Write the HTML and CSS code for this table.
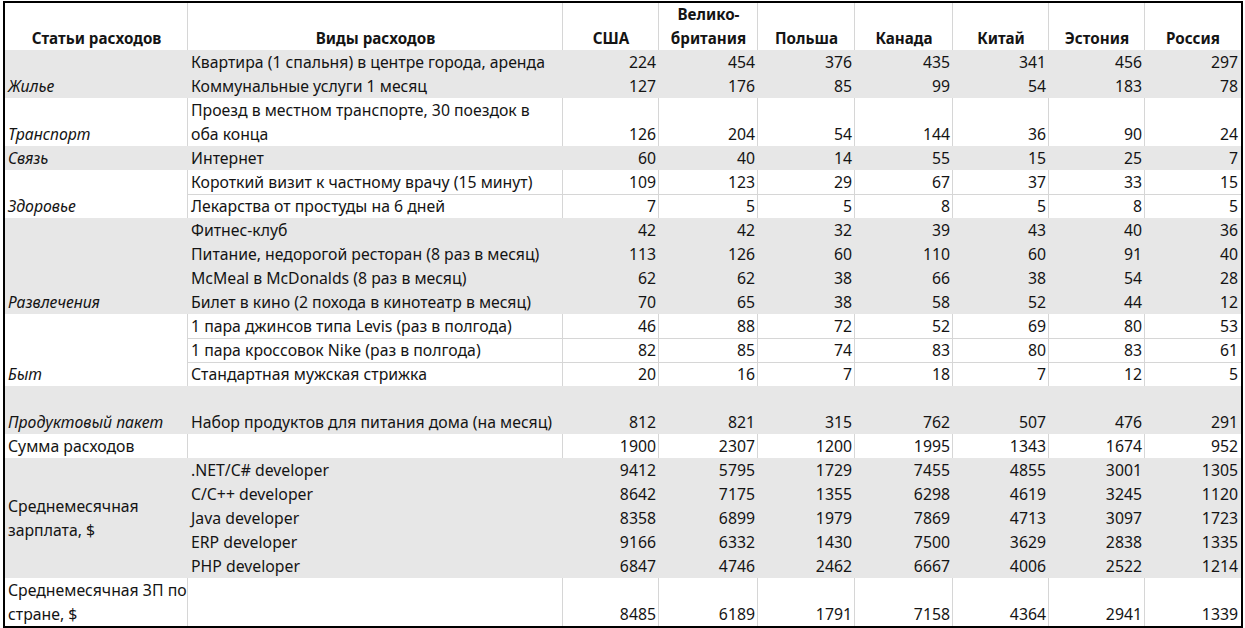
FILE: index.html
```html
<!DOCTYPE html>
<html lang="ru">
<head>
<meta charset="utf-8">
<title>Расходы и зарплаты</title>
<link rel="stylesheet" href="styles.css">
</head>
<body>
<div class="wrap">
<table class="sheet">
  <colgroup>
    <col class="c-cat"><col class="c-kind">
    <col class="c96"><col class="c99"><col class="c97"><col class="c98"><col class="c96"><col class="c96"><col class="c96">
  </colgroup>
  <thead>
    <tr class="w head">
      <th>Статьи расходов</th>
      <th>Виды расходов</th>
      <th>США</th>
      <th>Велико-<br>британия</th>
      <th>Польша</th>
      <th>Канада</th>
      <th>Китай</th>
      <th>Эстония</th>
      <th class="last">Россия</th>
    </tr>
  </thead>
  <tbody>
    <tr class="g">
      <td class="cat it" rowspan="2">Жилье</td>
      <td class="kind">Квартира (1 спальня) в центре города, аренда</td>
      <td class="n">224</td><td class="n">454</td><td class="n">376</td><td class="n">435</td><td class="n">341</td><td class="n">456</td><td class="n last">297</td>
    </tr>
    <tr class="g">
      <td class="kind">Коммунальные услуги 1 месяц</td>
      <td class="n">127</td><td class="n">176</td><td class="n">85</td><td class="n">99</td><td class="n">54</td><td class="n">183</td><td class="n last">78</td>
    </tr>
    <tr class="w">
      <td class="cat it">Транспорт</td>
      <td class="kind">Проезд в местном транспорте, 30 поездок в<br>оба конца</td>
      <td class="n">126</td><td class="n">204</td><td class="n">54</td><td class="n">144</td><td class="n">36</td><td class="n">90</td><td class="n last">24</td>
    </tr>
    <tr class="g">
      <td class="cat it">Связь</td>
      <td class="kind">Интернет</td>
      <td class="n">60</td><td class="n">40</td><td class="n">14</td><td class="n">55</td><td class="n">15</td><td class="n">25</td><td class="n last">7</td>
    </tr>
    <tr class="w">
      <td class="cat it" rowspan="2">Здоровье</td>
      <td class="kind">Короткий визит к частному врачу (15 минут)</td>
      <td class="n">109</td><td class="n">123</td><td class="n">29</td><td class="n">67</td><td class="n">37</td><td class="n">33</td><td class="n last">15</td>
    </tr>
    <tr class="w line">
      <td class="kind">Лекарства от простуды на 6 дней</td>
      <td class="n">7</td><td class="n">5</td><td class="n">5</td><td class="n">8</td><td class="n">5</td><td class="n">8</td><td class="n last">5</td>
    </tr>
    <tr class="g">
      <td class="cat it" rowspan="4">Развлечения</td>
      <td class="kind">Фитнес-клуб</td>
      <td class="n">42</td><td class="n">42</td><td class="n">32</td><td class="n">39</td><td class="n">43</td><td class="n">40</td><td class="n last">36</td>
    </tr>
    <tr class="g">
      <td class="kind">Питание, недорогой ресторан (8 раз в месяц)</td>
      <td class="n">113</td><td class="n">126</td><td class="n">60</td><td class="n">110</td><td class="n">60</td><td class="n">91</td><td class="n last">40</td>
    </tr>
    <tr class="g">
      <td class="kind">McMeal в McDonalds (8 раз в месяц)</td>
      <td class="n">62</td><td class="n">62</td><td class="n">38</td><td class="n">66</td><td class="n">38</td><td class="n">54</td><td class="n last">28</td>
    </tr>
    <tr class="g">
      <td class="kind">Билет в кино (2 похода в кинотеатр в месяц)</td>
      <td class="n">70</td><td class="n">65</td><td class="n">38</td><td class="n">58</td><td class="n">52</td><td class="n">44</td><td class="n last">12</td>
    </tr>
    <tr class="w">
      <td class="cat it" rowspan="3">Быт</td>
      <td class="kind">1 пара джинсов типа Levis (раз в полгода)</td>
      <td class="n">46</td><td class="n">88</td><td class="n">72</td><td class="n">52</td><td class="n">69</td><td class="n">80</td><td class="n last">53</td>
    </tr>
    <tr class="w line">
      <td class="kind">1 пара кроссовок Nike (раз в полгода)</td>
      <td class="n">82</td><td class="n">85</td><td class="n">74</td><td class="n">83</td><td class="n">80</td><td class="n">83</td><td class="n last">61</td>
    </tr>
    <tr class="w line">
      <td class="kind">Стандартная мужская стрижка</td>
      <td class="n">20</td><td class="n">16</td><td class="n">7</td><td class="n">18</td><td class="n">7</td><td class="n">12</td><td class="n last">5</td>
    </tr>
    <tr class="g tall">
      <td class="cat it">Продуктовый пакет</td>
      <td class="kind">Набор продуктов для питания дома (на месяц)</td>
      <td class="n">812</td><td class="n">821</td><td class="n">315</td><td class="n">762</td><td class="n">507</td><td class="n">476</td><td class="n last">291</td>
    </tr>
    <tr class="w">
      <td class="cat">Сумма расходов</td>
      <td class="kind"></td>
      <td class="n">1900</td><td class="n">2307</td><td class="n">1200</td><td class="n">1995</td><td class="n">1343</td><td class="n">1674</td><td class="n last">952</td>
    </tr>
    <tr class="g">
      <td class="cat mid" rowspan="5">Среднемесячная<br>зарплата, $</td>
      <td class="kind">.NET/C# developer</td>
      <td class="n">9412</td><td class="n">5795</td><td class="n">1729</td><td class="n">7455</td><td class="n">4855</td><td class="n">3001</td><td class="n last">1305</td>
    </tr>
    <tr class="g">
      <td class="kind">C/C++ developer</td>
      <td class="n">8642</td><td class="n">7175</td><td class="n">1355</td><td class="n">6298</td><td class="n">4619</td><td class="n">3245</td><td class="n last">1120</td>
    </tr>
    <tr class="g">
      <td class="kind">Java developer</td>
      <td class="n">8358</td><td class="n">6899</td><td class="n">1979</td><td class="n">7869</td><td class="n">4713</td><td class="n">3097</td><td class="n last">1723</td>
    </tr>
    <tr class="g">
      <td class="kind">ERP developer</td>
      <td class="n">9166</td><td class="n">6332</td><td class="n">1430</td><td class="n">7500</td><td class="n">3629</td><td class="n">2838</td><td class="n last">1335</td>
    </tr>
    <tr class="g">
      <td class="kind">PHP developer</td>
      <td class="n">6847</td><td class="n">4746</td><td class="n">2462</td><td class="n">6667</td><td class="n">4006</td><td class="n">2522</td><td class="n last">1214</td>
    </tr>
    <tr class="w">
      <td class="cat">Среднемесячная ЗП по<br>стране, $</td>
      <td class="kind"></td>
      <td class="n">8485</td><td class="n">6189</td><td class="n">1791</td><td class="n">7158</td><td class="n">4364</td><td class="n">2941</td><td class="n last">1339</td>
    </tr>
  </tbody>
</table>
</div>
</body>
</html>
```

FILE: styles.css
```css
:root {
  --grid: #d6d6d6;
  --gray: #e7e7e7;
  --ink: #141414;
}

html, body {
  margin: 0;
  padding: 0;
  background: #ffffff;
}

.wrap {
  padding: 1px 0 0 3px;
}

.sheet {
  width: 1240px;
  table-layout: fixed;
  border-collapse: separate;
  border-spacing: 0;
  border: 2px solid #000;
  font-family: "Noto Sans", "Open Sans", sans-serif;
  font-size: 15.8px;
  color: var(--ink);
}

.c-cat { width: 183px; }
.c-kind { width: 375px; }
.c96 { width: 96px; }
.c97 { width: 97px; }
.c98 { width: 98px; }
.c99 { width: 99px; }

.sheet th,
.sheet td {
  padding: 0 3px;
  line-height: 24px;
  height: 24px;
  vertical-align: bottom;
  white-space: nowrap;
  overflow: hidden;
}

.sheet th {
  font-weight: 700;
  font-size: 15.2px;
  text-align: center;
  line-height: 23.5px;
}

.head th { height: 47px; }

.tall td { height: 48px; }

.sheet td { text-align: left; }
.sheet td.n { text-align: right; padding-right: 3px; }

.it { font-style: italic; }
.mid { vertical-align: middle !important; }

.g td { background: var(--gray); }

.w th,
.w td {
  background: #fff;
  box-shadow: inset -1px 0 0 var(--grid);
}

.w th.last,
.w td.last {
  box-shadow: none;
}

.w.line td {
  box-shadow: inset -1px 0 0 var(--grid), inset 0 1px 0 var(--grid);
}

.w.line td.last {
  box-shadow: inset 0 1px 0 var(--grid);
}
```
